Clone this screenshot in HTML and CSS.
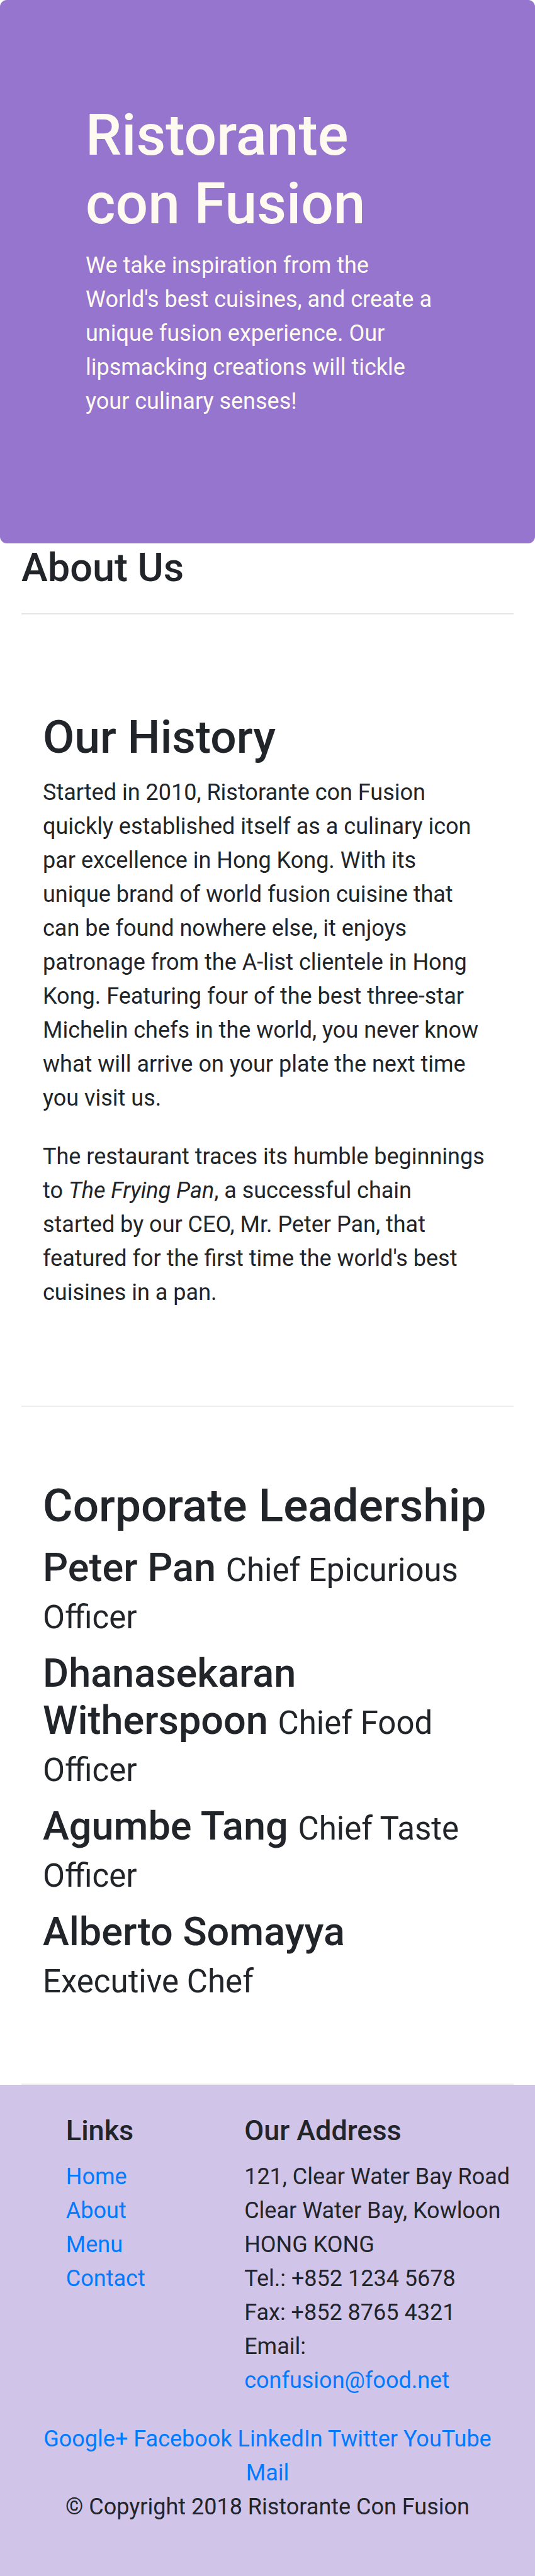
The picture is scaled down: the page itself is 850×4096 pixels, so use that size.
FILE: index.html
```html
<!DOCTYPE html>
<html lang="en">
<head>
<meta charset="utf-8">
<meta name="viewport" content="width=device-width, initial-scale=1">
<title>Ristorante Con Fusion: About Us</title>
<link rel="stylesheet" href="styles.css">
</head>
<body>
<header class="jumbotron">
  <h1 class="jumbotron-title">Ristorante<br>con Fusion</h1>
  <p class="jumbotron-text">We take inspiration from the World's best cuisines, and create a unique fusion experience. Our lipsmacking creations will tickle your culinary senses!</p>
</header>
<main class="container">
  <div class="page-head">
    <h2 class="page-title">About Us</h2>
    <hr class="rule">
  </div>
  <section class="row-content history">
    <h2 class="section-title">Our History</h2>
    <p class="paragraph">Started in 2010, Ristorante con Fusion quickly established itself as a culinary icon par excellence in Hong Kong. With its unique brand of world fusion cuisine that can be found nowhere else, it enjoys patronage from the A-list clientele in Hong Kong. Featuring four of the best three-star Michelin chefs in the world, you never know what will arrive on your plate the next time you visit us.</p>
    <p class="paragraph">The restaurant traces its humble beginnings to <em>The Frying Pan</em>, a successful chain started by our CEO, Mr. Peter Pan, that featured for the first time the world's best cuisines in a pan.</p>
  </section>
  <section class="row-content leadership">
    <h2 class="section-title">Corporate Leadership</h2>
    <h3 class="leader">Peter Pan <small class="role">Chief Epicurious Officer</small></h3>
    <h3 class="leader">Dhanasekaran Witherspoon <small class="role">Chief Food Officer</small></h3>
    <h3 class="leader">Agumbe Tang <small class="role">Chief Taste Officer</small></h3>
    <h3 class="leader">Alberto Somayya <small class="role">Executive Chef</small></h3>
  </section>
</main>
<footer class="footer">
  <div class="footer-columns">
    <nav class="footer-links">
      <h5 class="footer-title">Links</h5>
      <ul class="link-list">
        <li><a href="#home">Home</a></li>
        <li><a href="#about">About</a></li>
        <li><a href="#menu">Menu</a></li>
        <li><a href="#contact">Contact</a></li>
      </ul>
    </nav>
    <div class="footer-address">
      <h5 class="footer-title">Our Address</h5>
      <address class="address">
        121, Clear Water Bay Road<br>
        Clear Water Bay, Kowloon<br>
        HONG KONG<br>
        Tel.: +852 1234 5678<br>
        Fax: +852 8765 4321<br>
        Email:<br>
        <a href="mailto:confusion@food.net">confusion@food.net</a>
      </address>
    </div>
  </div>
  <div class="social">
    <a href="#google">Google+</a>
    <a href="#facebook">Facebook</a>
    <a href="#linkedin">LinkedIn</a>
    <a href="#twitter">Twitter</a>
    <a href="#youtube">YouTube</a>
    <a href="#mail">Mail</a>
  </div>
  <p class="copyright">© Copyright 2018 Ristorante Con Fusion</p>
</footer>
</body>
</html>
```
FILE: styles.css
```css
* {
  box-sizing: border-box;
}

body {
  margin: 0;
  background: #fff;
  color: #212529;
  font-family: Roboto, "Liberation Sans", sans-serif;
  font-size: 36px;
  line-height: 54px;
}

h1, h2, h3, h5, p, ul {
  margin: 0;
}

h1, h2, h3, h5 {
  font-weight: 500;
}

a {
  color: #007bff;
  text-decoration: none;
}

.jumbotron {
  padding: 161px 136px 199px;
  border-radius: 11px;
  background: #9575cd;
  color: floralwhite;
}

.jumbotron-title {
  margin-bottom: 16px;
  font-size: 91px;
  line-height: 109px;
}

.jumbotron-text,
.paragraph,
.leader {
  padding-right: 10px;
}

.container {
  padding: 0 34px;
}

.page-title {
  font-size: 63px;
  line-height: 78px;
}

.rule {
  height: 2px;
  margin: 33px 0 35px;
  border: 0;
  background: #e5e5e5;
}

.row-content {
  padding: 114px 34px;
  border-bottom: 2px solid #eee;
}

.section-title {
  margin-bottom: 17px;
  font-size: 73px;
  line-height: 87px;
}

.paragraph {
  margin-bottom: 39px;
}

.history {
  padding-top: 117px;
}

.leadership {
  padding-bottom: 129px;
}

.leader {
  font-size: 63px;
  line-height: 75px;
}

.leader + .leader {
  margin-top: 18px;
}

.role {
  font-size: 51px;
  font-weight: 400;
  line-height: 1;
}

.footer {
  padding: 46px 0;
  background: #d1c4e9;
}

.footer-columns {
  display: grid;
  grid-template-columns: 1fr 4fr 7fr;
  margin-bottom: 39px;
}

.footer-links {
  grid-column: 2;
}

.footer-links,
.footer-address {
  padding: 0 34px;
}

.footer-address {
  padding-right: 0;
}

.footer-title {
  margin-bottom: 19px;
  font-size: 45px;
  line-height: 54px;
}

.link-list {
  padding: 0;
  list-style: none;
}

.address {
  font-style: normal;
}

.social {
  padding: 0 64px;
  text-align: center;
}

.copyright {
  margin-bottom: 39px;
  text-align: center;
}
```
